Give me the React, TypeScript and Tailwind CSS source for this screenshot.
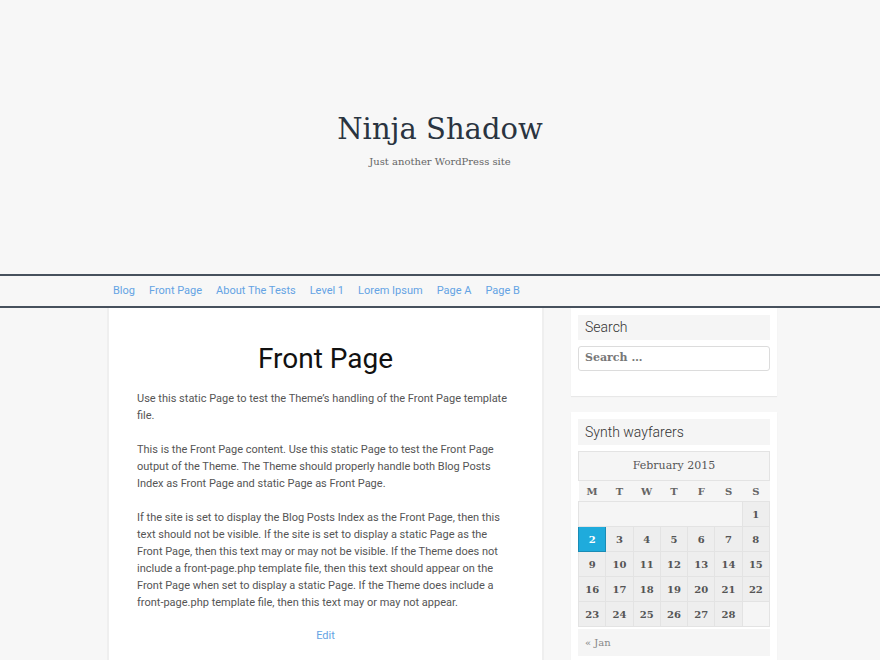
import React from "react"

const slab = "font-['Roboto_Slab','DejaVu_Serif',serif]"
const body = "font-['Roboto',sans-serif]"

const navLinks = ["Blog", "Front Page", "About The Tests", "Level 1", "Lorem Ipsum", "Page A", "Page B"]

const weeks: (number | null)[][] = [
  [null, null, null, null, null, null, 1],
  [2, 3, 4, 5, 6, 7, 8],
  [9, 10, 11, 12, 13, 14, 15],
  [16, 17, 18, 19, 20, 21, 22],
  [23, 24, 25, 26, 27, 28, null],
]

function Calendar() {
  return (
    <table className={`w-full border-collapse text-[10px] text-[#555] ${slab}`}>
      <thead>
        <tr>
          <th colSpan={7} className="h-[29px] border border-[#e3e3e3] bg-[#f5f5f5] text-[11px] font-normal text-[#555]">
            February 2015
          </th>
        </tr>
        <tr>
          {["M", "T", "W", "T", "F", "S", "S"].map((d, i) => (
            <th key={i} className="h-[21px] bg-[#f5f5f5] font-bold text-[#666]">{d}</th>
          ))}
        </tr>
      </thead>
      <tbody>
        {weeks.map((w, wi) => {
          if (wi === 0) {
            return (
              <tr key={wi}>
                <td colSpan={6} className="h-[25px] border border-[#e3e3e3] bg-[#f5f5f5]" />
                <td className="h-[25px] border border-[#e3e3e3] bg-[#eeeeee] text-center font-bold">1</td>
              </tr>
            )
          }
          return (
            <tr key={wi}>
              {w.map((d, di) =>
                d === null ? (
                  <td key={di} className="h-[25px] border border-[#e3e3e3] bg-[#f5f5f5]" />
                ) : d === 2 ? (
                  <td key={di} className="h-[25px] border border-[#1a8cb5] bg-[#1fabdc] text-center font-bold text-white">{d}</td>
                ) : (
                  <td key={di} className="h-[25px] border border-[#e3e3e3] bg-[#eeeeee] text-center font-bold">{d}</td>
                )
              )}
            </tr>
          )
        })}
      </tbody>
    </table>
  )
}

function App() {
  return (
    <div className="h-[660px] overflow-hidden bg-[#f7f7f7] font-['Roboto',sans-serif]">
      <header className="flex h-[274px] flex-col items-center pt-[111px]">
        <h1 className={`text-[29px] font-light leading-[36px] text-[#2a3440] ${slab}`}>Ninja Shadow</h1>
        <p className={`mt-[7px] text-[10px] text-[#666] ${slab}`}>Just another WordPress site</p>
      </header>

      <nav className="h-[34px] border-y-2 border-[#47515d]">
        <div className="mx-auto w-[674px] pl-[4px]">
          <ul className={`flex h-[30px] items-center gap-[14px] pl-[6px] text-[11px] text-[#64a3e4] ${body}`}>
            {navLinks.map((l) => (
              <li key={l}>{l}</li>
            ))}
          </ul>
        </div>
      </nav>

      <div className="mx-auto flex w-[674px] items-start pl-[4px]">
        <main className="min-h-[352px] w-[437px] border-x-2 border-[#efefef] bg-white px-[28px] pb-[20px] pt-[34px]">
          <h2 className="text-center text-[28px] leading-[34px] text-[#111]">Front Page</h2>
          <div className={`mt-[14px] text-[11px] leading-[17px] text-[#555] ${body}`}>
            <p>Use this static Page to test the Theme’s handling of the Front Page template file.</p>
            <p className="mt-[17px]">
              This is the Front Page content. Use this static Page to test the Front Page output of the Theme. The Theme
              should properly handle both Blog Posts Index as Front Page and static Page as Front Page.
            </p>
            <p className="mt-[17px]">
              If the site is set to display the Blog Posts Index as the Front Page, then this text should not be visible.
              If the site is set to display a static Page as the Front Page, then this text may or may not be visible. If
              the Theme does not include a front-page.php template file, then this text should appear on the Front Page
              when set to display a static Page. If the Theme does include a front-page.php template file, then this text
              may or may not appear.
            </p>
            <p className="mt-[16px] text-center text-[#64a3e4]">Edit</p>
          </div>
        </main>

        <aside className="ml-[27px] flex w-[206px] flex-col gap-[16px]">
          <section className="bg-white p-[7px] pb-[25px] shadow-[0_1px_1px_rgba(0,0,0,0.06)]">
            <h3 className="flex h-[25px] items-center bg-[#f5f5f5] px-[7px] text-[14px] font-light text-[#333]">Search</h3>
            <div
              className={`mt-[6px] flex h-[25px] items-center rounded-[3px] border border-[#dcdcdc] px-[6px] text-[11px] font-bold text-[#777] ${slab}`}
            >
              Search …
            </div>
          </section>

          <section className="bg-white p-[7px] shadow-[0_1px_1px_rgba(0,0,0,0.06)]">
            <h3 className="mb-[6px] flex h-[26px] items-center bg-[#f5f5f5] px-[7px] text-[14px] font-light text-[#333]">
              Synth wayfarers
            </h3>
            <Calendar />
            <div className={`mt-[2px] flex h-[27px] items-center bg-[#f5f5f5] px-[7px] text-[10px] text-[#888] ${slab}`}>
              « Jan
            </div>
          </section>
        </aside>
      </div>
    </div>
  )
}

export default App
